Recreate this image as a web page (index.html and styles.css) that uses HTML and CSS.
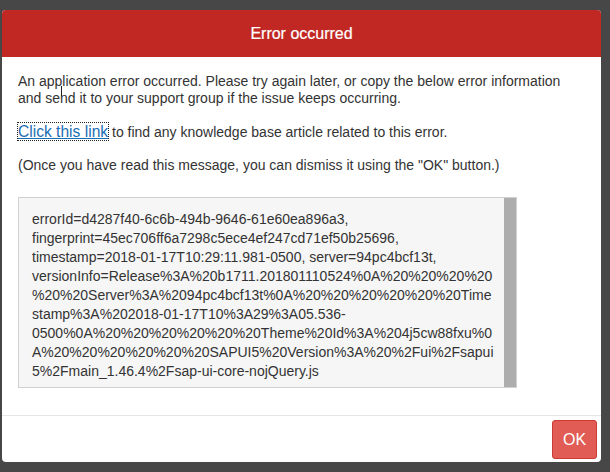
FILE: index.html
```html
<!DOCTYPE html>
<html>
  <head>
    <meta charset="UTF-8" />
    <meta name="viewport" content="width=device-width, initial-scale=1.0" />
    <title>Error occurred</title>
    <link rel="stylesheet" href="styles.css">
  </head>
  <body>
    <div class="dialog">
      <div class="dialog-header">Error occurred</div>

      <div class="dialog-body">
        <p class="message">
          An application error occurred. Please try again later, or copy the below error information
          and send it to your support group if the issue keeps occurring.
        </p>
        <p class="message">
          <a href="#" class="kb-link">Click this link</a> to find any knowledge base article related to this error.
        </p>
        <p class="message">
          (Once you have read this message, you can dismiss it using the "OK" button.)
        </p>

        <div class="error-box">
          <div class="error-text">errorId=d4287f40-6c6b-494b-9646-61e60ea896a3,<br>fingerprint=45ec706ff6a7298c5ece4ef247cd71ef50b25696,<br>timestamp=2018-01-17T10:29:11.981-0500, server=94pc4bcf13t,<br>versionInfo=Release%3A%20b1711.201801110524%0A%20%20%20%20<br>%20%20Server%3A%2094pc4bcf13t%0A%20%20%20%20%20%20Time<br>stamp%3A%202018-01-17T10%3A29%3A05.536-<br>0500%0A%20%20%20%20%20%20Theme%20Id%3A%204j5cw88fxu%0<br>A%20%20%20%20%20%20SAPUI5%20Version%3A%20%2Fui%2Fsapui<br>5%2Fmain_1.46.4%2Fsap-ui-core-nojQuery.js</div>
          <div class="scrollbar"></div>
        </div>

        <span class="cursor"></span>
      </div>

      <div class="dialog-footer">
        <button class="ok-button">OK</button>
      </div>
    </div>
  </body>
</html>
```

FILE: styles.css
```css
body {
  background-color: #474747;
  font-family: "Liberation Sans", Arial, sans-serif;
  margin: 0;
  padding: 10px 9px 10px 2px;
}

.dialog {
  background-color: #fff;
  border-radius: 4px;
  overflow: hidden;
  width: 599px;
}

.dialog-header {
  background-color: #c12823;
  color: #fff;
  font-size: 16px;
  text-align: center;
  height: 47px;
  line-height: 47px;
  -webkit-text-stroke: 0.2px #fff;
}

.dialog-body {
  position: relative;
  padding: 16px 16px 27px 16px;
}

.message {
  color: #333;
  font-size: 14px;
  line-height: 17px;
  margin: 0 0 16px 0;
}

.kb-link {
  color: #1a6eb3;
  font-size: 15.6px;
  line-height: 17px;
  text-decoration: underline;
  outline: 1px dotted #222;
}

.error-box {
  display: flex;
  width: 497px;
  height: 189px;
  margin-top: 23px;
  border: 1px solid #d0d0d0;
  background-color: #f6f6f6;
}

.error-text {
  flex: 1;
  padding: 12px 10px 0 13px;
  color: #333;
  font-size: 14px;
  line-height: 19px;
}

.scrollbar {
  width: 12px;
  background-color: #adadad;
}

.cursor {
  position: absolute;
  left: 59px;
  top: 29px;
  width: 1px;
  height: 10px;
  background-color: #222;
}

.dialog-footer {
  border-top: 1px solid #e6e6e6;
  display: flex;
  justify-content: flex-end;
  padding: 4px 4px 3px 0;
}

.ok-button {
  width: 45px;
  height: 39px;
  background-color: #e05c55;
  border: 1px solid #cc3a34;
  border-radius: 3px;
  color: #fff;
  font-family: "Liberation Sans", Arial, sans-serif;
  font-size: 16px;
  padding: 0;
}
```
